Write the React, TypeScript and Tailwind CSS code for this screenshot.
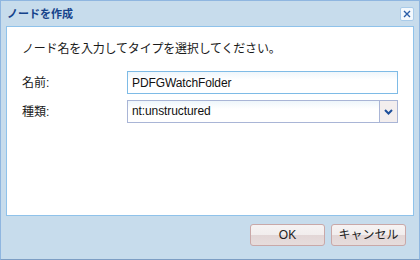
import React, { useState } from 'react';

const jp = "font-['Liberation_Sans','Noto_Sans_CJK_JP',sans-serif]";

export default function App() {
  const [name, setName] = useState('PDFGWatchFolder');

  return (
    <div className={`w-[420px] h-[260px] flex flex-col border border-[#8fb6e0] border-b-[#7d9ec4] bg-[#c7dcec] ${jp}`}>
      {/* header */}
      <div className="h-[25px] flex items-center justify-between pl-[6px] pr-[5px]">
        <span className="text-[11px] font-bold text-[#15428b] leading-none pt-[1px]">ノードを作成</span>
        <button className="w-[14px] h-[14px] mt-[1px] flex items-center justify-center rounded-[2px] border border-[#a9cbe9] bg-[#f4f9fd]">
          <svg width="8" height="8" viewBox="0 0 8 8">
            <path d="M1 1 L7 7 M7 1 L1 7" stroke="#2b5ea8" strokeWidth="1.4" />
          </svg>
        </button>
      </div>

      {/* body */}
      <div className="mx-[5px] h-[190px] bg-white border border-[#8fc2ea] px-[15px] pt-[14px] text-[12px] text-[#1a1a1a]">
        <p className="leading-[16px] tracking-[-0.2px]">ノード名を入力してタイプを選択してください。</p>

        <div className="mt-[14px] flex flex-col gap-[6px]">
          <div className="flex items-center">
            <label className="w-[105px]">名前:</label>
            <input
              value={name}
              onChange={(e) => setName(e.target.value)}
              className="flex-1 h-[23px] px-[4px] border border-[#7ebbe6] bg-[linear-gradient(#eef6fb,#ffffff_8px)] outline-none text-[12px] tracking-[-0.1px] text-[#111]"
            />
          </div>
          <div className="flex items-center">
            <label className="w-[105px]">種類:</label>
            <div className="flex-1 h-[23px] flex border border-[#a9b5d6] bg-[linear-gradient(#eef6fb,#ffffff_8px)]">
              <span className="flex-1 px-[4px] leading-[21px] tracking-[-0.1px] text-[#111]">nt:unstructured</span>
              <div className="w-[18px] flex items-center justify-center border-l border-[#a9b5d6] bg-[#f3eeee]">
                <svg width="9" height="6" viewBox="0 0 9 6">
                  <path d="M1 1 L4.5 4.5 L8 1" fill="none" stroke="#1d4f9a" strokeWidth="2" />
                </svg>
              </div>
            </div>
          </div>
        </div>
      </div>

      {/* footer */}
      <div className="flex-1 flex justify-end items-start pt-[8px] pr-[13px] gap-[6px]">
        {['OK', 'キャンセル'].map((t) => (
          <button
            key={t}
            className="w-[75px] h-[22px] rounded-[3px] border border-[#c9a8a8] bg-[linear-gradient(#f6f3f3_0%,#f1eded_50%,#e2d6d6_51%,#e6dcdc_100%)] text-[12px] text-[#222] leading-none"
          >
            {t}
          </button>
        ))}
      </div>
    </div>
  );
}
